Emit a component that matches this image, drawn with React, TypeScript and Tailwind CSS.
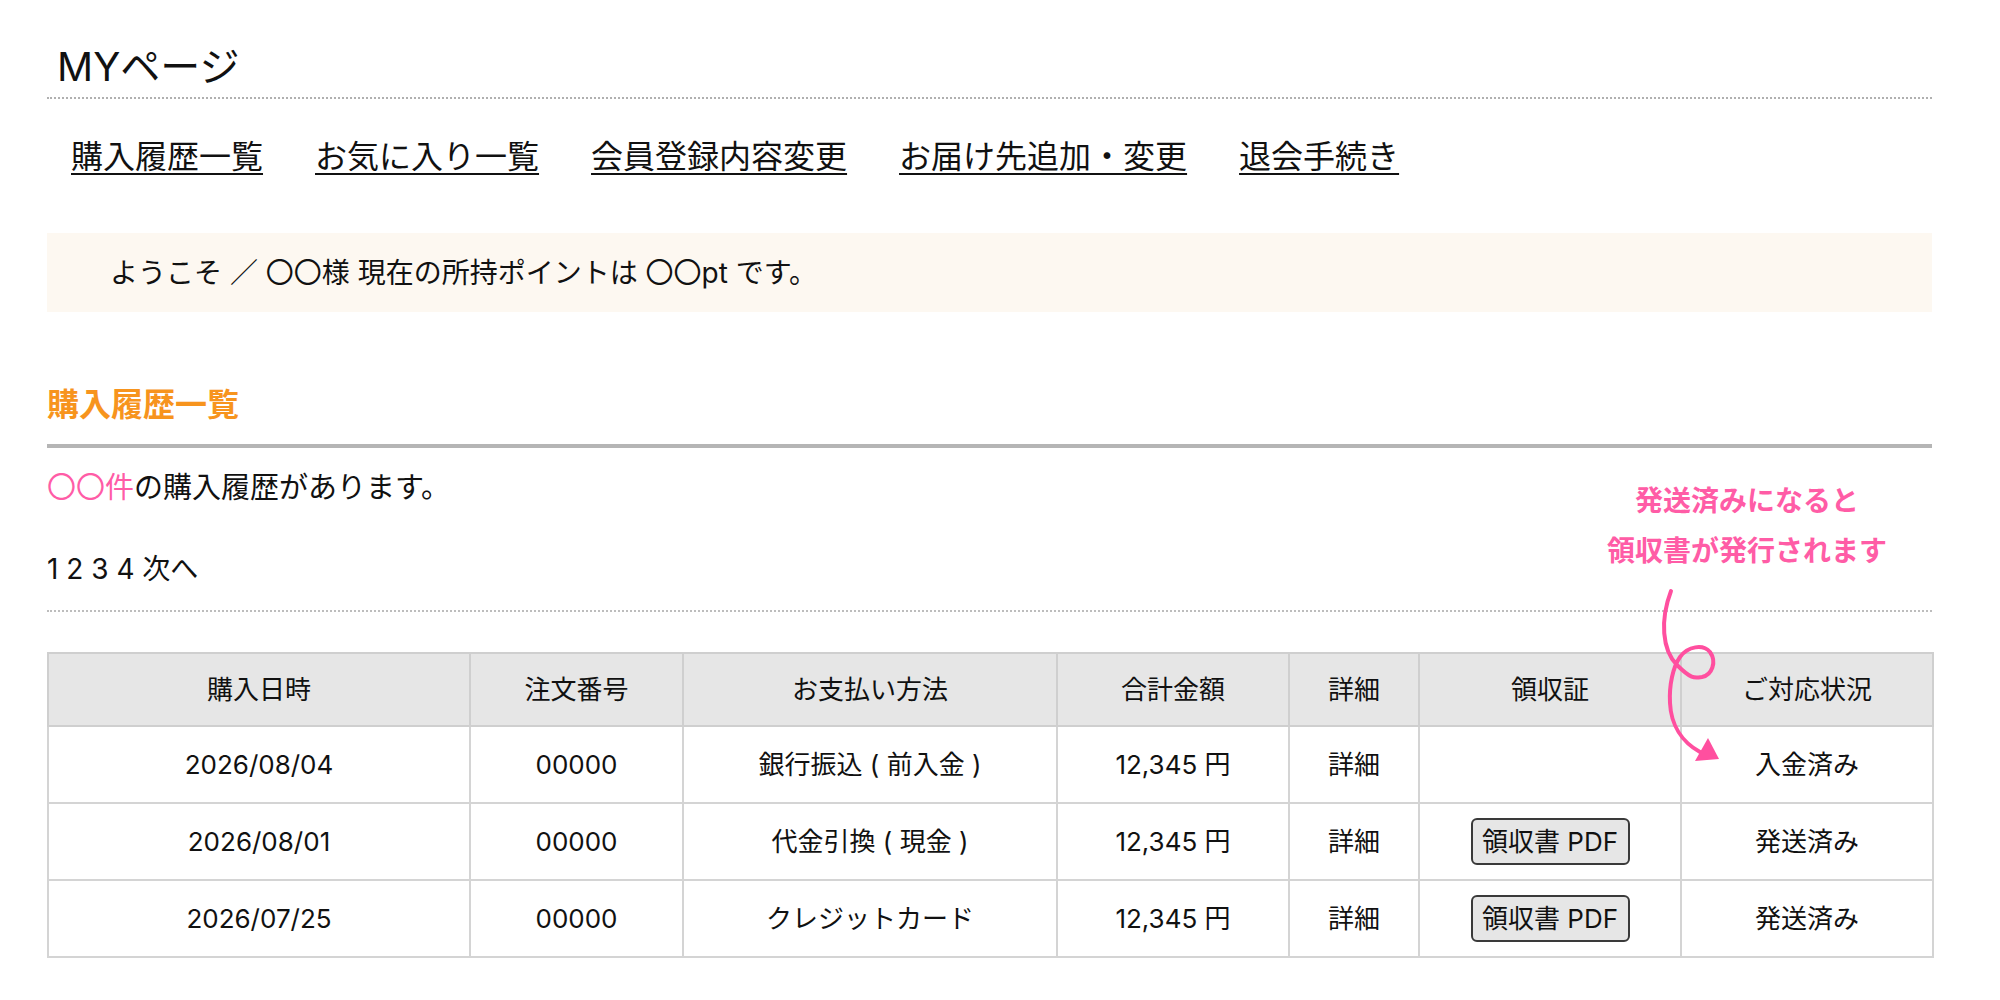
import React from "react";

const navLinks = [
  "購入履歴一覧",
  "お気に入り一覧",
  "会員登録内容変更",
  "お届け先追加・変更",
  "退会手続き",
];

const orders = [
  { date: "2026/08/04", no: "00000", pay: "銀行振込 ( 前入金 )", total: "12,345 円", receipt: false, status: "入金済み" },
  { date: "2026/08/01", no: "00000", pay: "代金引換 ( 現金 )", total: "12,345 円", receipt: true, status: "発送済み" },
  { date: "2026/07/25", no: "00000", pay: "クレジットカード", total: "12,345 円", receipt: true, status: "発送済み" },
];

const headers = ["購入日時", "注文番号", "お支払い方法", "合計金額", "詳細", "領収証", "ご対応状況"];
const colWidths = [422, 213, 374, 232, 130, 262, 252];

export default function App() {
  return (
    <div className="min-h-screen bg-white text-[#111] font-['Inter','Noto_Sans_CJK_JP',sans-serif]">
      <div className="relative ml-[47px] w-[1885px] pt-[37px] pb-[44px]">
        {/* page title */}
        <div className="border-b-2 border-dotted border-[#b0b0b0]">
          <h1 className="pl-[10px] text-[40px] leading-[60px] font-normal">MYページ</h1>
        </div>

        {/* member menu */}
        <nav className="mt-[34px] flex h-[48px] items-center gap-[52px] pl-[24px] text-[32px] leading-[48px]">
          {navLinks.map((label) => (
            <a key={label} href="#" className="underline underline-offset-[5px] decoration-2">
              {label}
            </a>
          ))}
        </nav>

        {/* welcome band */}
        <div className="mt-[52px] flex h-[79px] items-center bg-[#fdf8f1] pl-[63px] text-[28px]">
          ようこそ ／ 〇〇様 現在の所持ポイントは 〇〇pt です。
        </div>

        {/* purchase history */}
        <h2 className="mt-[69px] border-b-4 border-[#b5b5b5] pb-[15px] text-[32px] font-bold leading-[48px] text-[#f7941d]">
          購入履歴一覧
        </h2>

        <p className="mt-[18px] text-[29px] leading-[44px]">
          <span className="text-[#ff5ca6]">〇〇件</span>の購入履歴があります。
        </p>

        <div className="border-b-2 border-dotted border-[#bdbdbd] pb-[19px]">
          <p className="mt-[37px] text-[28px] leading-[44px]">1 2 3 4 次へ</p>
        </div>

        <table className="mt-[40px] w-full table-fixed border-collapse text-center text-[26px]">
          <colgroup>
            {colWidths.map((w, i) => (
              <col key={i} style={{ width: w }} />
            ))}
          </colgroup>
          <thead>
            <tr className="h-[73px] bg-[#e6e6e6]">
              {headers.map((h) => (
                <th key={h} className="border-2 border-[#cfcfcf] font-normal">
                  {h}
                </th>
              ))}
            </tr>
          </thead>
          <tbody>
            {orders.map((o) => (
              <tr key={o.date} className="h-[77px]">
                <td className="border-2 border-[#d4d4d4]">{o.date}</td>
                <td className="border-2 border-[#d4d4d4]">{o.no}</td>
                <td className="border-2 border-[#d4d4d4]">{o.pay}</td>
                <td className="border-2 border-[#d4d4d4]">{o.total}</td>
                <td className="border-2 border-[#d4d4d4]">詳細</td>
                <td className="border-2 border-[#d4d4d4]">
                  {o.receipt && (
                    <button className="inline-flex h-[47px] w-[159px] items-center justify-center rounded-[6px] border-2 border-[#3a3a3a] bg-[#e6e6e6] text-[26px]">
                      領収書 PDF
                    </button>
                  )}
                </td>
                <td className="border-2 border-[#d4d4d4]">{o.status}</td>
              </tr>
            ))}
          </tbody>
        </table>

        {/* receipt note */}
        <div className="absolute left-[1560px] top-[476px] w-[280px] text-center text-[28px] font-bold leading-[50px] text-[#ff5ca6]">
          <p>発送済みになると</p>
          <p>領収書が発行されます</p>
        </div>

        {/* curly arrow pointing at the status column */}
        <svg
          className="absolute left-[1593px] top-[580px]"
          width="100"
          height="200"
          viewBox="0 0 100 200"
          fill="none"
        >
          <path
            d="M31 11 C20 40 22 70 37 85 S55 98 62 97 C72 95 77 82 70 72 C63 64 48 66 40 77 C33 87 29 105 30 123 C31 145 42 162 60 172"
            stroke="#ff4f9f"
            strokeWidth="4"
            strokeLinecap="round"
          />
          <polygon points="79,179 55,181 68,158" fill="#ff4f9f" />
        </svg>
      </div>
    </div>
  );
}
